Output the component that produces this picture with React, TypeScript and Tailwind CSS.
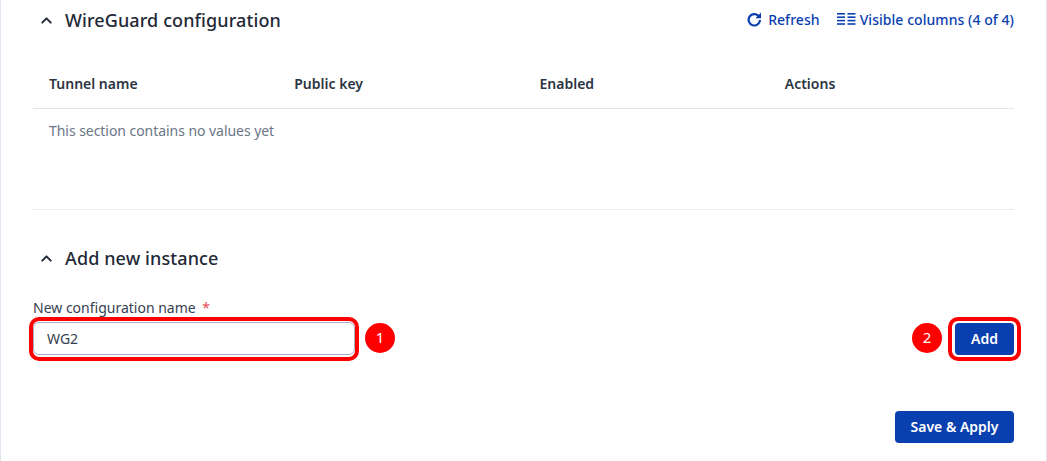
import { ChevronUp } from "lucide-react";

function ColumnsIcon() {
    return (
        <svg width="19" height="12" viewBox="0 0 19 12" fill="currentColor">
            <rect x="0" y="0" width="8" height="1.6" />
            <rect x="0" y="3.4" width="8" height="1.6" />
            <rect x="0" y="6.8" width="8" height="1.6" />
            <rect x="0" y="10.2" width="8" height="1.6" />
            <rect x="10.5" y="0" width="8" height="1.6" />
            <rect x="10.5" y="3.4" width="8" height="1.6" />
            <rect x="10.5" y="6.8" width="8" height="1.6" />
            <rect x="10.5" y="10.2" width="8" height="1.6" />
        </svg>
    );
}

function RefreshIcon() {
    return (
        <svg width="15" height="15" viewBox="0 0 15 15" fill="none" stroke="currentColor" strokeWidth="2.2">
            <path d="M13 8a5.7 5.7 0 1 1-1.7-4.3L13 5.2" />
            <path d="M14 0.6v5.6h-5.6" fill="currentColor" stroke="none" />
        </svg>
    );
}

function Badge({ n }: { n: number }) {
    return (
        <div className="w-[30px] h-[30px] mb-[3px] rounded-full bg-[#ff0000] text-white flex items-center justify-center text-[15px]">
            {n}
        </div>
    );
}

function SectionTitle({ title }: { title: string }) {
    return (
        <div className="flex items-center gap-[10px] pl-[5px]">
            <ChevronUp size={17} strokeWidth={2.75} className="text-[#1f2937]" />
            <h2 className="text-[18px] leading-[24px] font-medium text-[#1f2937] tracking-[0.1px]">{title}</h2>
        </div>
    );
}

export default function App() {
    const columns = ["Tunnel name", "Public key", "Enabled", "Actions"];

    return (
        <main className="h-[461px] w-[1047px] overflow-hidden bg-white border-x border-[#dfe5f0] font-['Noto_Sans',sans-serif]">
            <div className="pl-[32px] pr-[32px]">
                <div className="flex items-center justify-between pt-[8px]">
                    <SectionTitle title="WireGuard configuration" />
                    <div className="flex items-center gap-[17px] text-[14px] tracking-[0.05px] font-medium text-[#0a3fb0] pb-[2px]">
                        <button className="flex items-center gap-[6px]">
                            <RefreshIcon />
                            Refresh
                        </button>
                        <button className="flex items-center gap-[4px]">
                            <ColumnsIcon />
                            Visible columns (4 of 4)
                        </button>
                    </div>
                </div>

                <div className="mt-[20px] grid grid-cols-4 h-[57px] pt-[6px] items-center border-b border-[#e2e6ee] text-[14px] font-semibold text-[#2b3442]">
                    {columns.map((c) => (
                        <div key={c} className="pl-[16px]">
                            {c}
                        </div>
                    ))}
                </div>
                <p className="pl-[16px] pt-[12px] h-[101px] border-b border-[#e8ebf1] text-[14px] tracking-[-0.05px] leading-[20px] text-[#6b7686]">
                    This section contains no values yet
                </p>

                <div className="pt-[36px]">
                    <SectionTitle title="Add new instance" />
                </div>

                <label className="block mt-[28px] h-[19px] text-[14px] leading-[20px] text-[#374151]">
                    New configuration name <span className="text-[#e5484d] ml-[3px]">*</span>
                </label>

                <div className="flex items-center justify-between -ml-[4px] -mr-[7px]">
                    <div className="flex items-center gap-[6px]">
                        <div className="pt-[1px] pb-[2px] border-[4px] border-[#ff0000] rounded-[10px]">
                            <input
                                readOnly
                                value="WG2"
                                className="block w-[322px] h-[33px] rounded-[6px] border border-[#a8b0c4] px-[13px] text-[14px] text-[#374151] outline-none"
                            />
                        </div>
                        <Badge n={1} />
                    </div>
                    <div className="flex items-center gap-[6px]">
                        <Badge n={2} />
                        <div className="px-[3px] py-[2px] border-[4px] border-[#ff0000] rounded-[10px]">
                            <button className="block w-[59px] h-[32px] pb-[2px] rounded-[4px] bg-[#0a3fb0] text-white text-[14px] font-semibold">
                                Add
                            </button>
                        </div>
                    </div>
                </div>

                <div className="flex justify-end mt-[50px]">
                    <button className="w-[119px] h-[32px] pb-[2px] rounded-[4px] bg-[#0a3fb0] text-white text-[14px] font-semibold">
                        Save &amp; Apply
                    </button>
                </div>
            </div>
        </main>
    );
}
